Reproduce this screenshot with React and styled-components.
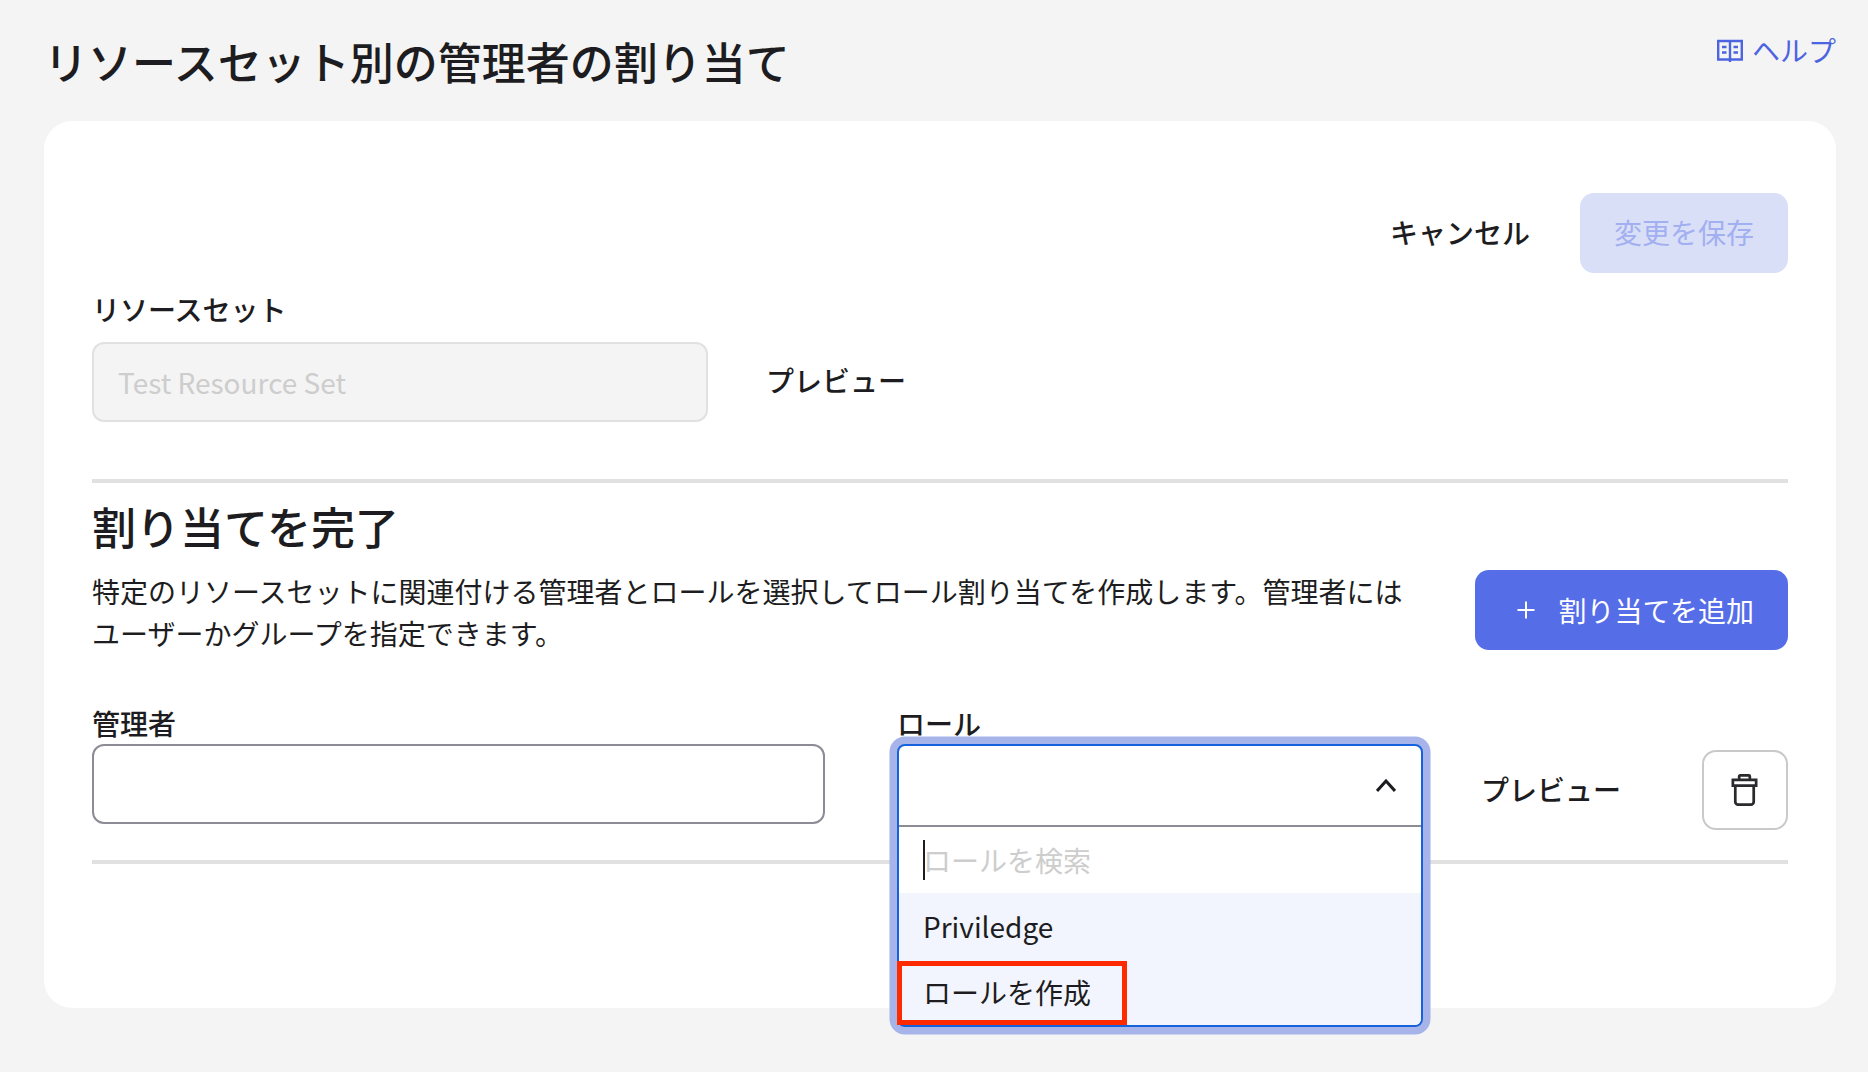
import styled, { createGlobalStyle } from "styled-components";

const GlobalStyle = createGlobalStyle`
  * {
    box-sizing: border-box;
  }
  body {
    margin: 0;
    background: #f4f4f4;
    color: #1d1d21;
    font-family: "Noto Sans CJK JP", "Noto Sans", sans-serif;
    font-size: 28px;
  }
`;

const Page = styled.div`
  width: 1868px;
  min-height: 1072px;
  padding: 0 32px 64px 44px;
`;

const Header = styled.header`
  height: 121px;
  display: flex;
  justify-content: space-between;
  align-items: flex-start;
`;

const Title = styled.h1`
  margin: 33px 0 0;
  font-size: 44px;
  line-height: 56px;
  font-weight: 500;
`;

const HelpLink = styled.a`
  margin-top: 30px;
  display: flex;
  align-items: center;
  gap: 9px;
  color: #4c64e0;
  line-height: 40px;
`;

const Card = styled.main`
  background: #fff;
  border-radius: 28px;
  padding: 72px 48px 144px;
`;

const Actions = styled.div`
  display: flex;
  justify-content: flex-end;
  align-items: center;
  gap: 50px;
`;

const TextButton = styled.button`
  border: 0;
  padding: 0 0 2px;
  background: none;
  color: #1d1d21;
  font: inherit;
  font-weight: 500;
`;

const FilledButton = styled.button`
  height: 80px;
  border: 0;
  border-radius: 14px;
  padding: 0 34px 2px;
  display: flex;
  align-items: center;
  background: #dadff8;
  color: #a2aff0;
  font: inherit;
`;

const AddButton = styled(FilledButton)`
  margin-top: 2px;
  padding: 0 34px 0 42px;
  gap: 24px;
  background: #566de8;
  color: #fff;
`;

const Label = styled.label`
  display: block;
  font-weight: 500;
`;

const ResourceLabel = styled(Label)`
  margin: 18px 0 15px;
  line-height: 36px;
`;

const ResourceRow = styled.div`
  display: flex;
  align-items: center;
  gap: 58px;
`;

const DisabledInput = styled.div`
  width: 616px;
  height: 80px;
  border: 2px solid #e1e1e1;
  border-radius: 12px;
  background: #f4f4f4;
  padding: 0 24px;
  display: flex;
  align-items: center;
  color: #cdcdcd;
`;

const ResourcePreview = styled(TextButton)`
  padding-bottom: 4px;
`;

const Divider = styled.hr`
  margin: ${(p) => p.$margin};
  border: 0;
  height: 4px;
  background: #e1e1e1;
`;

const Heading = styled.h2`
  margin: 15px 0 0;
  font-size: 44px;
  line-height: 56px;
  font-weight: 500;
`;

const IntroRow = styled.div`
  margin-top: 14px;
  display: flex;
  justify-content: space-between;
  align-items: flex-start;
`;

const Intro = styled.p`
  margin: 2px 0 0;
  width: 1330px;
  line-height: 42px;
`;

const AssignRow = styled.div`
  margin-top: 58px;
  display: flex;
  align-items: flex-start;
`;

const Field = styled.div`
  width: ${(p) => p.$width}px;
  margin-right: ${(p) => p.$gap}px;
  flex: none;
  position: relative;
`;

const FieldLabel = styled(Label)`
  height: 32px;
  line-height: 22px;
`;

const TextInput = styled.div`
  height: 80px;
  border: 2px solid #8c8c96;
  border-radius: 12px;
  background: #fff;
`;

const ComboSlot = styled.div`
  height: 80px;
`;

const Combo = styled.div`
  position: absolute;
  top: 32px;
  left: 0;
  right: 0;
  border: 2px solid #1662dd;
  border-radius: 8px;
  background: #fff;
  box-shadow: 0 0 0 7.5px #a6b4ea;
`;

const ComboTrigger = styled.div`
  height: 81px;
  border-bottom: 2px solid #8c8c96;
  padding-right: 25px;
  display: flex;
  justify-content: flex-end;
  align-items: center;
`;

const SearchRow = styled.div`
  height: 66px;
  padding: 0 24px;
  display: flex;
  align-items: center;
  color: #cdcdcd;
`;

const Caret = styled.span`
  width: 2px;
  height: 40px;
  margin-right: -2px;
  background: #1d1d21;
`;

const Option = styled.div`
  height: 67px;
  padding: 0 24px 2px;
  display: flex;
  align-items: center;
  background: #f2f5fd;
  color: #1d1d21;
`;

const LastOption = styled(Option)`
  height: 65px;
  border-radius: 0 0 6px 6px;
  position: relative;
`;

const Highlight = styled.span`
  position: absolute;
  left: -2px;
  top: 1px;
  width: 230px;
  height: 64px;
  border: 5px solid #ff2a00;
`;

const RowPreview = styled.div`
  margin-top: 38px;
  height: 80px;
  display: flex;
  align-items: center;
  flex: none;
  width: 221px;
`;

const IconButton = styled.button`
  margin-top: 38px;
  width: 86px;
  height: 80px;
  flex: none;
  border: 2px solid #c9c9c9;
  border-radius: 14px;
  background: #fff;
  padding: 0 2px 0 0;
  display: flex;
  justify-content: center;
  align-items: center;
  color: #2a2a2e;
`;

function BookIcon() {
  return (
    <svg width="26" height="23" viewBox="0 0 26 23" fill="none" stroke="currentColor" strokeWidth="2.4">
      <path d="M1.2 2h23.6v18.5H1.2zM13 2v21" />
      <path d="M5 8h4.5M5 13.5h4.5M16.5 8H21M16.5 13.5H21" />
    </svg>
  );
}

function PlusIcon() {
  return (
    <svg width="18" height="18" viewBox="0 0 18 18" fill="none" stroke="currentColor" strokeWidth="2">
      <path d="M9 0.5v17M0.5 9h17" />
    </svg>
  );
}

function ChevronUp() {
  return (
    <svg width="20" height="13" viewBox="0 0 20 13" fill="none" stroke="#1d1d21" strokeWidth="3">
      <path d="M1 12l9-10 9 10" />
    </svg>
  );
}

function TrashIcon() {
  return (
    <svg width="27" height="32" viewBox="0 0 27 33" fill="none" stroke="currentColor" strokeWidth="2.8">
      <path d="M1.5 6h24v6h-24zM8 6V2.5a1 1 0 0 1 1-1h9a1 1 0 0 1 1 1V6" />
      <path d="M4 12v16.5a3 3 0 0 0 3 3h13a3 3 0 0 0 3-3V12" />
    </svg>
  );
}

export default function App() {
  return (
    <Page>
      <GlobalStyle />
      <Header>
        <Title>リソースセット別の管理者の割り当て</Title>
        <HelpLink>
          <BookIcon />
          ヘルプ
        </HelpLink>
      </Header>
      <Card>
        <Actions>
          <TextButton>キャンセル</TextButton>
          <FilledButton>変更を保存</FilledButton>
        </Actions>
        <ResourceLabel>リソースセット</ResourceLabel>
        <ResourceRow>
          <DisabledInput>Test Resource Set</DisabledInput>
          <ResourcePreview>プレビュー</ResourcePreview>
        </ResourceRow>
        <Divider $margin="57px 0 0" />
        <Heading>割り当てを完了</Heading>
        <IntroRow>
          <Intro>
            特定のリソースセットに関連付ける管理者とロールを選択してロール割り当てを作成します。管理者にはユーザーかグループを指定できます。
          </Intro>
          <AddButton>
            <PlusIcon />
            割り当てを追加
          </AddButton>
        </IntroRow>
        <AssignRow>
          <Field $width={733} $gap={72}>
            <FieldLabel>管理者</FieldLabel>
            <TextInput />
          </Field>
          <Field $width={526} $gap={58}>
            <FieldLabel>ロール</FieldLabel>
            <ComboSlot />
            <Combo>
              <ComboTrigger>
                <ChevronUp />
              </ComboTrigger>
              <SearchRow>
                <Caret />
                ロールを検索
              </SearchRow>
              <Option>Priviledge</Option>
              <LastOption>
                ロールを作成
                <Highlight />
              </LastOption>
            </Combo>
          </Field>
          <RowPreview>
            <TextButton>プレビュー</TextButton>
          </RowPreview>
          <IconButton>
            <TrashIcon />
          </IconButton>
        </AssignRow>
        <Divider $margin="30px 0 0" />
      </Card>
    </Page>
  );
}
